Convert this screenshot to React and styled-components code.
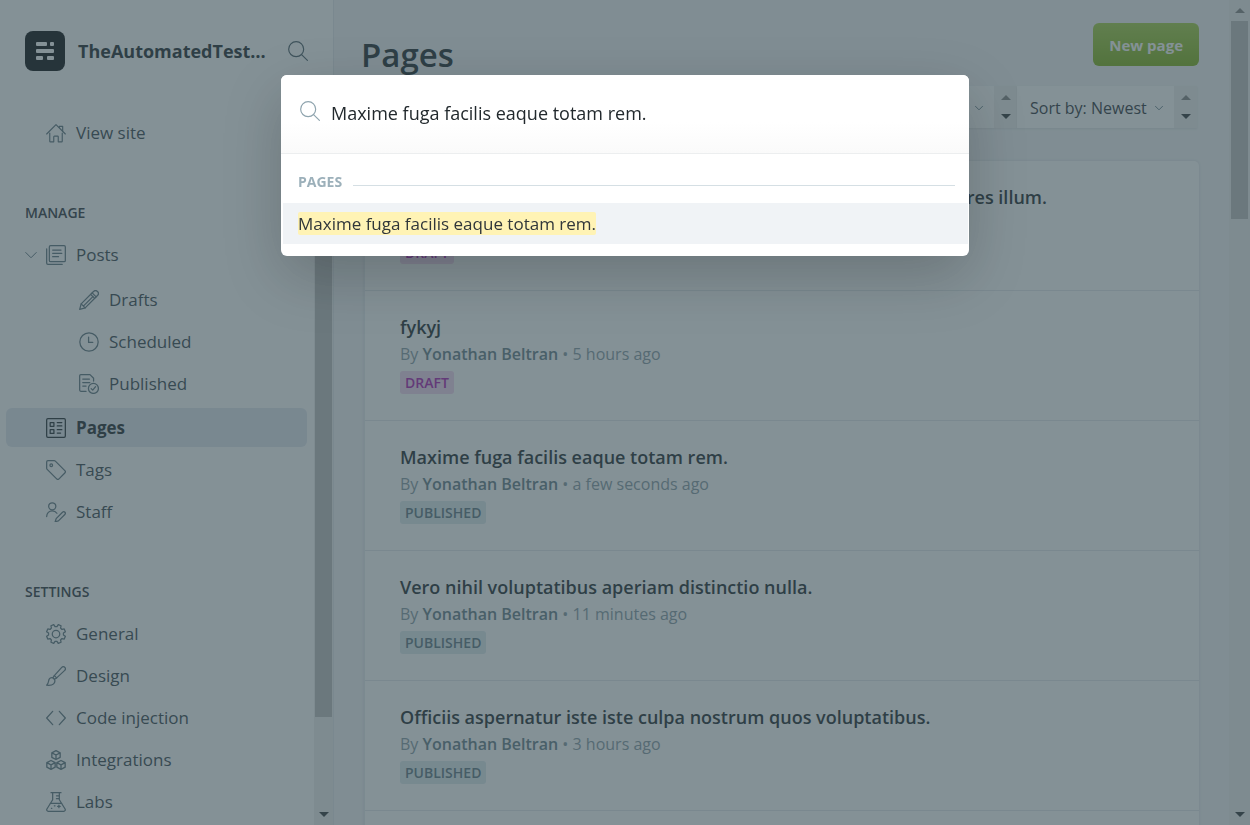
import React from "react";
import styled, { createGlobalStyle, css } from "styled-components";

const GlobalStyle = createGlobalStyle`
  * { box-sizing: border-box; }
  body {
    margin: 0;
    font-family: "Open Sans", "Noto Sans", sans-serif;
    color: #2b3439;
    background: #f4f5f7;
  }
  button, input, select { font-family: inherit; }
  h1, h2, h3, p, ul { margin: 0; padding: 0; }
  ul { list-style: none; }
`;

/* ---------- icons ---------- */

const Svg = styled.svg`
  flex: none;
  width: ${(p) => p.$size || 20}px;
  height: ${(p) => p.$size || 20}px;
  fill: none;
  stroke: currentColor;
  stroke-width: ${(p) => p.$stroke || 1.5};
  stroke-linecap: round;
  stroke-linejoin: round;
`;

const Icon = ({ size, stroke, children }) => (
  <Svg viewBox="0 0 24 24" $size={size} $stroke={stroke} aria-hidden="true">
    {children}
  </Svg>
);

const SearchIcon = () => (
  <Icon stroke={1.4}>
    <circle cx="9.8" cy="9.8" r="9" />
    <path d="M16.3 16.3 23.3 23.3" />
  </Icon>
);
const HomeIcon = () => (
  <Icon stroke={1.4}>
    <path d="M.8 13.2 12 2l11.200 11.200" />
    <path d="M16 5.500V4h4v5.500" />
    <path d="M4.500 12v9.800c0 .5.4.8.8.8h4v-6c0-.5.4-.8.8-.8h3.800c.5 0 .8.400.8.8v6h4c.5 0 .8-.400.8-.8V12" />
  </Icon>
);
const PostsIcon = () => (
  <Icon stroke={1.5}>
    <rect x="4" y=".8" width="19.2" height="19.2" rx="1.500" />
    <path d="M8 6h10M8 10h11M8 14h7" />
    <path d="M.8 4.500v17.200c0 .8.7 1.500 1.500 1.500h17.200" />
  </Icon>
);
const PencilIcon = () => (
  <Icon stroke={1.5}>
    <path d="M22.200 1.800a3.400 3.400 0 0 0-4.800 0L2.600 16.600.8 23.200l6.600-1.800L22.200 6.600a3.400 3.400 0 0 0 0-4.800z" />
    <path d="M15.800 3.400l4.800 4.800M14 5.200l4.800 4.800M2.600 16.600l4.800 4.800M17 7.600 5.500 19" />
  </Icon>
);
const ClockIcon = () => (
  <Icon stroke={1.5}>
    <circle cx="12" cy="12" r="11" />
    <path d="M11.500 6v6.500H16.500" />
  </Icon>
);
const PublishedIcon = () => (
  <Icon stroke={1.5}>
    <path d="M8.500 20.800H2.200A1.500 1.500 0 0 1 .8 19.300V2.200C.8 1.400 1.400.8 2.200.8h11l4.300 4.300v3.400" />
    <path d="M4.500 6h8M4.500 10.200h8.500M4.500 14.500h4" />
    <circle cx="17.300" cy="17.300" r="6" />
    <path d="m14.600 17.500 1.900 1.900 3.400-4.200" />
  </Icon>
);
const PagesIcon = () => (
  <Icon stroke={1.5}>
    <rect x=".8" y=".8" width="22.400" height="22.400" rx="1.500" />
    <rect x="5" y="5.500" width="4.500" height="4.500" />
    <rect x="5" y="14" width="4.500" height="4.500" />
    <path d="M13.500 5.500h5.500M13.500 9.500h5.500M13.500 14h5.500M13.500 18h4" />
  </Icon>
);
const TagIcon = () => (
  <Icon stroke={1.5}>
    <path d="M.8 2.300v7.500c0 .5.200 1 .6 1.400l11.400 11.400c.8.800 2 .8 2.800 0l7-7c.8-.8.8-2 0-2.800L11.200 1.400c-.4-.4-.9-.6-1.400-.6H2.300C1.500.8.8 1.500.8 2.300z" />
    <circle cx="6.300" cy="6.300" r="1.600" />
  </Icon>
);
const StaffIcon = () => (
  <Icon stroke={1.5}>
    <circle cx="7.500" cy="5.200" r="4.300" />
    <path d="M.8 17.500c0-4 3-7 6.700-7 2.400 0 4.400 1.200 5.600 3" />
    <path d="M22.700 12.300a2 2 0 0 0-2.900 0l-7.600 7.600-1.200 3.800 3.900-1.100 7.700-7.600a2 2 0 0 0 .1-2.700z" />
  </Icon>
);

/* Eight teeth, with a notch at the top, right, bottom and left. */
const gearPoints = Array.from({ length: 8 }, (_, i) => 22.5 + i * 45)
  .flatMap((tooth) => [
    [tooth - 15, 9],
    [tooth - 9, 11.6],
    [tooth + 9, 11.6],
    [tooth + 15, 9],
  ])
  .map(([deg, r]) => {
    const a = (deg * Math.PI) / 180;
    return `${(12 + r * Math.cos(a)).toFixed(2)},${(12 + r * Math.sin(a)).toFixed(2)}`;
  })
  .join(" ");

const GearIcon = () => (
  <Icon stroke={1.5}>
    <circle cx="12" cy="12" r="4.500" />
    <polygon points={gearPoints} />
  </Icon>
);
const BrushIcon = () => (
  <Icon stroke={1.5}>
    <path d="M22.500 1.500c-1-1-2.600-.9-3.600.1L10 11.500l2.800 2.800 9.700-9.100c1.100-1 1.100-2.700 0-3.700z" />
    <path d="m10 11.500-1.800 2.600 1.900 1.800 2.700-1.600" />
    <path d="M8.200 14.100c-2.200-.6-4.300.6-4.800 2.700-.5 2.300-.5 4.400-2.600 6.300 3.600.4 6.600 0 8.300-1.700 1.500-1.500 1.900-3.800 1-5.500" />
  </Icon>
);
const CodeIcon = () => (
  <Icon stroke={1.5}>
    <path d="M8 4 .8 12 8 20M16 4l7.200 8L16 20" />
  </Icon>
);
const BoxesIcon = () => (
  <Icon stroke={1.6}>
    <path d="m12 .8 5 2.600v5.400l-5 2.600-5-2.600V3.400zM7 3.400l5 2.600 5-2.600M12 6v5.400" />
    <path d="m6 12.600 5 2.600v5.400l-5 2.600-5-2.600v-5.400zM1 15.200l5 2.600 5-2.600M6 17.800v5.400" />
    <path d="m18 12.600 5 2.600v5.400l-5 2.600-5-2.600v-5.400zM13 15.200l5 2.600 5-2.600M18 17.800v5.400" />
  </Icon>
);
const FlaskIcon = () => (
  <Icon stroke={1.5}>
    <path d="M6 .8h12M8 .8v8.500L1.100 20.400c-.7 1.300.1 2.800 1.500 2.800h18.800c1.400 0 2.200-1.500 1.500-2.800L16 9.300V.8M5 13.500h14M12.500 4.500H16M12.500 8H16" />
    <path d="M15.500 15.800v3M14 17.300h3M10 16.500h.8M6.500 19.500h.5" />
  </Icon>
);
const ChevronIcon = ({ size = 12, stroke = 2 }) => (
  <Icon size={size} stroke={stroke}>
    <path d="m1.500 7 10.500 10.500L22.500 7" />
  </Icon>
);
const LogoMark = () => (
  <svg width="18" height="18" viewBox="0 0 18 18" fill="#fff" aria-hidden="true">
    <rect width="11" height="4" rx="1" />
    <rect x="14" width="4" height="4" rx="1" />
    <rect y="7" width="18" height="4" rx="1" />
    <rect y="14" width="7" height="4" rx="1" />
    <rect x="11" y="14" width="7" height="4" rx="1" />
  </svg>
);

/* ---------- scrollbars ---------- */

const Track = styled.div`
  flex: none;
  display: flex;
  flex-direction: column;
  align-items: center;
  width: ${(p) => (p.$wide ? 21 : 19)}px;
  background: #f1f1f1;
`;
const Thumb = styled.div`
  width: 17px;
  flex: 0 0 ${(p) => p.$share}%;
  background: #c1c1c1;
`;
const Arrow = styled.span`
  width: 0;
  height: 0;
  border: 5px solid transparent;
  ${(p) =>
    p.$up
      ? css`border-top: 0; border-bottom-color: #8b8b8b;`
      : css`border-bottom: 0; border-top-color: #3a3f42;`}
`;
const ArrowCell = styled.div`
  display: flex;
  flex: none;
  align-items: center;
  justify-content: center;
  height: 21px;
`;
const Fill = styled.div`
  flex: 1;
`;

const Scrollbar = ({ share, wide }) => (
  <Track $wide={wide} aria-hidden="true">
    <ArrowCell><Arrow $up /></ArrowCell>
    <Thumb $share={share} />
    <Fill />
    <ArrowCell><Arrow /></ArrowCell>
  </Track>
);

/* ---------- sidebar ---------- */

const Shell = styled.div`
  display: flex;
  height: 100vh;
  overflow: hidden;
`;
const Sidebar = styled.aside`
  display: flex;
  flex: none;
  flex-direction: column;
  width: 334px;
  background: #fff;
  border-right: 1px solid #e5e9ed;
`;
const Brand = styled.div`
  display: flex;
  flex: none;
  align-items: center;
  gap: 13px;
  padding: 31px 25px 0;
`;
const Logo = styled.div`
  display: grid;
  flex: none;
  place-items: center;
  width: 40px;
  height: 40px;
  border-radius: 8px;
  background: #15171a;
`;
const SiteName = styled.div`
  flex: 1;
  min-width: 0;
  font-size: 18px;
  font-weight: 700;
  line-height: 24px;
  white-space: nowrap;
`;
const IconButton = styled.button`
  display: flex;
  padding: 0;
  border: 0;
  background: none;
  color: #54666f;
`;
const NavScroll = styled.div`
  display: flex;
  flex: 1;
  min-height: 0;
  margin-top: 39px;
`;
const Nav = styled.nav`
  display: flex;
  flex: 1;
  flex-direction: column;
  overflow: hidden;
  padding: 3px 7px 0 6px;
`;
const NavHeading = styled.h2`
  margin: 48px 0 12px;
  padding-left: 19px;
  font-size: 14px;
  font-weight: 600;
  line-height: 20px;
  color: #394047;
  text-transform: uppercase;
`;
const NavList = styled.ul`
  display: flex;
  flex: none;
  flex-direction: column;
`;
const SubList = styled(NavList)`
  margin: 6px 0 2px;
`;
const NavLink = styled.a`
  display: flex;
  flex: none;
  align-items: center;
  gap: 10px;
  height: 39px;
  margin-bottom: 3px;
  padding-left: ${(p) => (p.$sub ? 73 : p.$lead ? 19 : 40)}px;
  border-radius: 6px;
  font-size: 17px;
  font-weight: ${(p) => (p.$active ? 700 : 400)};
  line-height: 24px;
  color: ${(p) => (p.$active ? "#2b3439" : "#424e56")};
  background: ${(p) => (p.$active ? "#e4e8f1" : "transparent")};
  text-decoration: none;
  white-space: nowrap;
  svg { color: ${(p) => (p.$active ? "#2b3439" : "#657a84")}; }
`;
const Lead = styled.span`
  display: flex;
  align-items: center;
  gap: 9px;
`;

const Item = ({ icon: Glyph, label, ...rest }) => (
  <NavLink href="#" {...rest}>
    <Glyph />
    <span>{label}</span>
  </NavLink>
);

/* ---------- page list ---------- */

const Main = styled.main`
  flex: 1;
  min-width: 0;
  padding: 23px 30px 0 27px;
  overflow: hidden;
`;
const TitleBar = styled.header`
  display: flex;
  align-items: flex-start;
  justify-content: space-between;
`;
const Title = styled.h1`
  margin-top: 8px;
  font-size: 33px;
  font-weight: 600;
  line-height: 48px;
`;
const NewPage = styled.button`
  height: 43px;
  padding: 0 16px;
  border: 0;
  border-radius: 6px;
  background: linear-gradient(#a8d14e, #84b322);
  color: #fff;
  font-size: 15px;
  font-weight: 700;
`;
const Filters = styled.div`
  display: flex;
  justify-content: flex-end;
  margin: 7px 2px 0 0;
`;
const FilterCell = styled.div`
  display: flex;
  height: 42px;
  box-shadow: 0 1px 2px rgba(0, 0, 0, 0.08);
`;
const SelectBox = styled.label`
  display: flex;
  align-items: center;
  gap: 8px;
  padding: 2px 11px 0 13px;
  background: #fff;
  color: #738a94;
`;
const Select = styled.select`
  padding: 0;
  border: 0;
  appearance: none;
  background: transparent;
  color: #394047;
  font-size: 16px;
`;
const Spinner = styled.div`
  display: flex;
  flex-direction: column;
  align-items: center;
  justify-content: space-between;
  width: 23px;
  padding: 9px 0;
  background: #f1f1f1;
`;
const Filter = ({ label, options }) => (
  <FilterCell>
    <SelectBox>
      <Select aria-label={label}>
        {options.map((o) => <option key={o}>{o}</option>)}
      </Select>
      <ChevronIcon size={8} stroke={3} />
    </SelectBox>
    <Spinner aria-hidden="true"><Arrow $up /><Arrow /></Spinner>
  </FilterCell>
);

const Card = styled.ul`
  margin: 33px 0 0 3px;
  border-left: 1px solid #e9edf1;
  border-radius: 5px;
  background: #fff;
  box-shadow: 0 0 3px rgba(40, 60, 90, 0.12);
`;
const Entry = styled.li`
  min-height: 130px;
  padding: 22px 35px 0;
  border-bottom: 1px solid #e5e9ed;
`;
const EntryTitle = styled.h3`
  font-size: 18px;
  font-weight: 600;
  line-height: 28px;
`;
const Meta = styled.p`
  font-size: 16px;
  line-height: 26px;
  color: #8c9ea8;
  b { font-weight: 600; color: #6b828d; }
`;
const Badge = styled.span`
  display: block;
  width: fit-content;
  margin-top: 4px;
  padding: 0 5px;
  border-radius: 3px;
  font-size: 14px;
  font-weight: 600;
  line-height: 23px;
  text-transform: uppercase;
  color: ${(p) => (p.$draft ? "#ad26b4" : "#657c87")};
  background: ${(p) => (p.$draft ? "#f3d6f0" : "#deebee")};
`;

/* ---------- search modal ---------- */

const Backdrop = styled.div`
  position: fixed;
  inset: 0;
  display: flex;
  align-items: flex-start;
  justify-content: center;
  padding: 75px 20px 20px;
  background: rgba(50, 72, 80, 0.6);
`;
const Dialog = styled.section`
  width: 100%;
  max-width: 688px;
  padding-bottom: 12px;
  border-radius: 6px;
  background: #fff;
  box-shadow: 0 20px 60px rgba(0, 0, 0, 0.2);
`;
const SearchRow = styled.label`
  display: flex;
  align-items: flex-start;
  gap: 11px;
  height: 79px;
  padding: 26px 19px 0;
  border-bottom: 1px solid #eceeef;
  border-radius: 6px 6px 0 0;
  background: linear-gradient(#fff 60%, #fafafa);
  color: #8fa4ae;
`;
const SearchInput = styled.input`
  flex: 1;
  min-width: 0;
  height: 24px;
  padding: 0;
  border: 0;
  outline: 0;
  background: transparent;
  color: #22292d;
  font-size: 18px;
`;
const GroupLabel = styled.h2`
  display: flex;
  align-items: center;
  gap: 11px;
  height: 49px;
  padding: 6px 14px 0 17px;
  font-size: 14px;
  font-weight: 700;
  color: #9cb0ba;
  text-transform: uppercase;
  &::after {
    content: "";
    flex: 1;
    height: 1px;
    margin-top: 7px;
    background: #d5dfe4;
  }
`;
const Result = styled.button`
  display: flex;
  align-items: center;
  width: calc(100% - 3px);
  height: 41px;
  margin-left: 2px;
  padding: 0 15px;
  border: 0;
  background: #f0f3f6;
  color: #22292d;
  font-size: 17px;
  line-height: 23px;
`;
const Mark = styled.mark`
  border-radius: 2px;
  background: #fff3b5;
  color: #30363a;
`;

const entries = [
  { title: "Voluptatem quia dolor sit amet consequatur quis et maiores dolores illum.", when: "5 hours ago", draft: true },
  { title: "fykyj", when: "5 hours ago", draft: true },
  { title: "Maxime fuga facilis eaque totam rem.", when: "a few seconds ago" },
  { title: "Vero nihil voluptatibus aperiam distinctio nulla.", when: "11 minutes ago" },
  { title: "Officiis aspernatur iste iste culpa nostrum quos voluptatibus.", when: "3 hours ago" },
];

export default function App() {
  return (
    <>
      <GlobalStyle />
      <Shell>
        <Sidebar>
          <Brand>
            <Logo><LogoMark /></Logo>
            <SiteName>TheAutomatedTest…</SiteName>
            <IconButton type="button" aria-label="Search site"><SearchIcon /></IconButton>
          </Brand>
          <NavScroll>
            <Nav aria-label="Main">
              <Item icon={HomeIcon} label="View site" />
              <NavHeading>Manage</NavHeading>
              <NavList>
                <li>
                  <NavLink href="#" $lead>
                    <Lead><ChevronIcon /><PostsIcon /></Lead>
                    <span>Posts</span>
                  </NavLink>
                  <SubList>
                    <li><Item $sub icon={PencilIcon} label="Drafts" /></li>
                    <li><Item $sub icon={ClockIcon} label="Scheduled" /></li>
                    <li><Item $sub icon={PublishedIcon} label="Published" /></li>
                  </SubList>
                </li>
                <li><Item $active aria-current="page" icon={PagesIcon} label="Pages" /></li>
                <li><Item icon={TagIcon} label="Tags" /></li>
                <li><Item icon={StaffIcon} label="Staff" /></li>
              </NavList>
              <NavHeading>Settings</NavHeading>
              <NavList>
                <li><Item icon={GearIcon} label="General" /></li>
                <li><Item icon={BrushIcon} label="Design" /></li>
                <li><Item icon={CodeIcon} label="Code injection" /></li>
                <li><Item icon={BoxesIcon} label="Integrations" /></li>
                <li><Item icon={FlaskIcon} label="Labs" /></li>
              </NavList>
            </Nav>
            <Scrollbar share={82} />
          </NavScroll>
        </Sidebar>
        <Main>
          <TitleBar>
            <Title>Pages</Title>
            <NewPage type="button">New page</NewPage>
          </TitleBar>
          <Filters>
            <Filter label="Tag" options={["All tags"]} />
            <Filter label="Sort" options={["Sort by: Newest", "Sort by: Oldest"]} />
          </Filters>
          <Card>
            {entries.map((e) => (
              <Entry key={e.title}>
                <EntryTitle>{e.title}</EntryTitle>
                <Meta>By <b>Yonathan Beltran</b> • {e.when}</Meta>
                <Badge $draft={e.draft}>{e.draft ? "Draft" : "Published"}</Badge>
              </Entry>
            ))}
            <Entry />
          </Card>
        </Main>
        <Scrollbar share={24} wide />
      </Shell>
      <Backdrop>
        <Dialog role="dialog" aria-label="Search">
          <SearchRow>
            <SearchIcon />
            <SearchInput type="text" aria-label="Search site" defaultValue="Maxime fuga facilis eaque totam rem." />
          </SearchRow>
          <GroupLabel>Pages</GroupLabel>
          <Result type="button"><Mark>Maxime fuga facilis eaque totam rem.</Mark></Result>
        </Dialog>
      </Backdrop>
    </>
  );
}
